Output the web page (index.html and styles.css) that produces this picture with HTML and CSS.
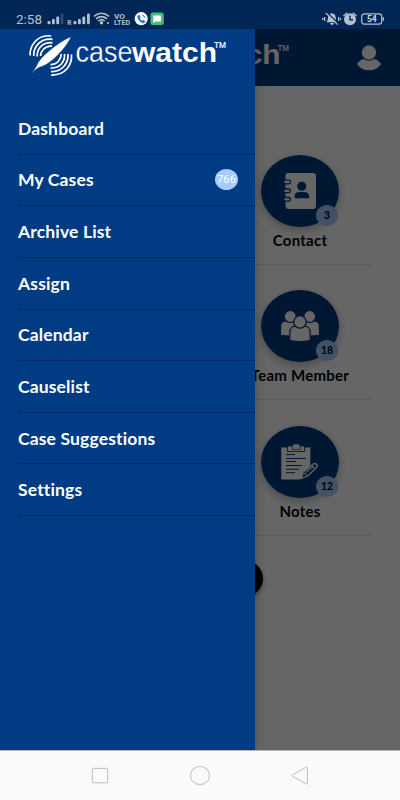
FILE: index.html
```html
<!DOCTYPE html>
<html lang="en">
<head>
    <meta charset="UTF-8">
    <meta name="viewport" content="width=device-width, initial-scale=1.0">
    <title>Casewatch</title>
    <link rel="stylesheet" href="styles.css">
</head>
<body>
    <div class="status-bar">
        <span class="time">2:58</span>
        <svg class="status-left" width="120" height="18" viewBox="0 0 120 18">
            <g fill="#b4c0d0">
                <rect x="0.5" y="11" width="3" height="3.3" rx="1"/>
                <rect x="5" y="9" width="2.8" height="5.3" rx="1"/>
                <rect x="9.3" y="6.5" width="2.8" height="7.8" rx="1"/>
                <rect x="13.6" y="3.5" width="2.8" height="10.8" rx="1" opacity=".25"/>
                <text x="20.3" y="14.5" class="roam">R</text>
                <rect x="26.5" y="11" width="3" height="3.3" rx="1"/>
                <rect x="31" y="9" width="2.8" height="5.3" rx="1"/>
                <rect x="35.4" y="6.5" width="2.8" height="7.8" rx="1"/>
                <rect x="40" y="3.5" width="2.8" height="10.8" rx="1"/>
                <circle cx="54.5" cy="12.8" r="1.7"/>
                <circle cx="61" cy="13" r="1.1"/>
                <text x="67" y="8.5" class="volte" textLength="11" lengthAdjust="spacingAndGlyphs">VO</text>
                <text x="67" y="15.3" class="volte" textLength="16" lengthAdjust="spacingAndGlyphs">LTED</text>
            </g>
            <g fill="none" stroke="#b4c0d0" stroke-width="1.6">
                <path d="M47 6.3Q54.5 0.3 62 6.3"/>
                <path d="M49 8.8Q54.5 4.4 60 8.8"/>
                <path d="M51.3 11Q54.5 8.3 57.7 11"/>
            </g>
            <circle cx="94.2" cy="8.7" r="6.6" fill="#fff"/>
            <path d="M90.3 6l1.8-1.2 1.7 2.4-1 1.1q.7 1.6 2.3 2.4l1.1-.9 2.2 1.8-1.4 1.7q-2.2.2-4.5-2.2T90.3 6z" fill="#1a73e8"/>
            <path d="M95.3 5.2q2.3.4 2.6 2.7" fill="none" stroke="#1a73e8"/>
            <rect x="103.5" y="2.5" width="13.3" height="12.6" rx="2.5" fill="#40bd7b"/>
            <path d="M106.3 5.5h7.6v6h-5.4l-2.2 1.6z" fill="#fff"/>
        </svg>
        <svg class="status-right" width="64" height="18" viewBox="0 0 64 18">
            <g fill="#b4c0d0">
                <path d="M4.5 12.2Q6 11 6 7.5T9.8 3.2Q13.7 3.8 13.7 7.5T15.3 12.2z"/>
                <path d="M8 13h4q-.5 2-2 2t-2-2z"/>
                <circle cx="28" cy="9.3" r="6"/>
                <path d="M21.4 6l3.8-3.2M34.6 6l-3.8-3.2M2.6 7v4M16.6 7v4M.7 8v2M18.5 8v2" stroke="#b4c0d0" stroke-width="1.3"/>
            </g>
            <path d="M4.8 2.2l12 11.7" stroke="#002655" stroke-width="1.3"/>
            <path d="M3.8 3l11.8 11.6" stroke="#b4c0d0" stroke-width="1.2"/>
            <path d="M28 5.5v4.3h3" fill="none" stroke="#002655" stroke-width="1.4"/>
            <rect x="39.7" y="3.9" width="20" height="10.2" rx="2.5" fill="none" stroke="#b4c0d0" stroke-width="1.2"/>
            <path d="M61.3 7.2v3.6" stroke="#b4c0d0" stroke-width="1.4"/>
            <text x="49.8" y="12" class="battery" fill="#d3dae4">54</text>
        </svg>
    </div>

    <div class="screen">
        <header class="app-header">
            <svg class="header-logo" width="160" height="44" viewBox="0 0 160 44">
                <text x="16" y="28" class="logo-bold" textLength="84.5" lengthAdjust="spacingAndGlyphs">watch</text>
                <text x="97.5" y="15" class="logo-tm" textLength="11.5" lengthAdjust="spacingAndGlyphs">TM</text>
            </svg>
            <svg class="user-icon" width="26" height="28" viewBox="0 0 26 28">
                <circle cx="13" cy="8.5" r="7.2" fill="#fff"/>
                <path d="M1 20Q4 15.5 8 15q5 3.5 10 0 4 .5 7 5-4 6.3-12 6.3T1 20z" fill="#fff"/>
            </svg>
        </header>

        <main class="tiles">
            <div class="tile">
                <div class="tile-icon">
                    <svg width="78" height="72" viewBox="0 0 78 72">
                        <rect x="24.5" y="18" width="30.5" height="36" rx="3" fill="#fff"/>
                        <g fill="#fff" stroke="#003b83" stroke-width="1.3">
                            <rect x="22.5" y="25.2" width="7" height="3.6" rx="1.8"/>
                            <rect x="22.5" y="34" width="7" height="3.6" rx="1.8"/>
                            <rect x="22.5" y="42.5" width="7" height="3.6" rx="1.8"/>
                        </g>
                        <circle cx="40.8" cy="31.2" r="4.5" fill="#003b83"/>
                        <path d="M33.7 43.2v-2q0-4.2 5-4.2h4q5.3 0 5.3 4.2v2z" fill="#003b83"/>
                    </svg>
                    <span class="badge">3</span>
                </div>
                <div class="tile-label">Contact</div>
            </div>
            <div class="tile">
                <div class="tile-icon">
                    <svg width="78" height="72" viewBox="0 0 78 72">
                        <g fill="#fff" stroke="#003b83" stroke-width="1.2">
                            <path d="M19.5 45V37q0-6 6-6h6q6 0 6 6v8q-9 2-18 0z"/>
                            <path d="M40.5 45V37q0-6 6-6h6q6 0 6 6v8q-9 2-18 0z"/>
                            <circle cx="29.3" cy="26.5" r="6"/>
                            <circle cx="48.7" cy="26.5" r="6"/>
                            <path d="M28.8 50.5V43q0-7 6.5-7h7.4q6.5 0 6.5 7v7.5q-10.2 2.3-20.4 0z"/>
                            <circle cx="39" cy="31.9" r="6.2"/>
                        </g>
                    </svg>
                    <span class="badge">18</span>
                </div>
                <div class="tile-label">Team Member</div>
            </div>
            <div class="tile">
                <div class="tile-icon">
                    <svg width="78" height="72" viewBox="0 0 78 72">
                        <path d="M20.3 21.5h29v20L39 53.5H20.3z" fill="#fff"/>
                        <path d="M26.5 25.5V20h5v-2h7.5v2h4.5v5.5z" fill="#fff" stroke="#003b83" stroke-width=".9"/>
                        <path d="M31.5 20v3.5h7.5V20" fill="none" stroke="#003b83" stroke-width=".7"/>
                        <path d="M25 28.5h9M25 32.5h20M25 35.5h10M25 39.5h16M25 43.2h13M25 46.7h9" stroke="#003b83" stroke-width="1"/>
                        <path d="M40.5 52.5l1.6-6.2L53 37.4q2.8-.2 3.3 3.2L46.7 50z" fill="#003b83" stroke="#fff" stroke-width="1.3" stroke-linejoin="round"/>
                        <path d="M42.2 46.4l4.3 3.5M50.5 39.5l3.7 3.3M44.7 46.6l7-5.7" fill="none" stroke="#fff" stroke-width="1.1"/>
                    </svg>
                    <span class="badge">12</span>
                </div>
                <div class="tile-label">Notes</div>
            </div>
            <div class="fab"></div>
        </main>

        <div class="scrim"></div>

        <nav class="drawer">
            <svg class="drawer-logo" width="204" height="46" viewBox="24 31 204 46">
                <g fill="none" stroke="#fff" stroke-width="1.7">
                    <path d="M51.2 36Q41 34.5 34.5 42.3 29.5 48.5 30.2 55.5"/>
                    <path d="M52.5 39.3Q43 38.2 37.5 44.6 33.2 50 33.8 56"/>
                    <path d="M52.5 42.8Q45 42 40.3 47 36.8 51.3 37.2 56.5"/>
                    <path d="M52 46.2Q47 45.6 43.2 49.5 40.4 52.8 40.6 56"/>
                    <path d="M51 75Q61 75.5 67 68.8 72.2 62.5 71.5 54.5"/>
                    <path d="M51 71.5Q59 72 64 66.3 68.6 61 68 54"/>
                    <path d="M50.5 68Q57.5 68.3 61.5 63.8 65 59.5 64.5 54"/>
                    <path d="M50.5 64.6Q55.5 64.6 58.6 61 61.3 57.8 61.2 54"/>
                </g>
                <path d="M71.3 36.5C64 39.5 56 45 49.5 50.5 43 56 38.5 60.5 36.3 66.3L31.3 74Q35 69.5 39.3 67.3C47 65.5 53.5 59.5 58.5 54.3 64 48.5 68.8 42.5 71.3 36.5z" fill="#fff" stroke="#003b83" stroke-width=".6"/>
                <text x="75.5" y="62.3" class="logo-light" textLength="57" lengthAdjust="spacingAndGlyphs">case</text>
                <text x="132" y="62.3" class="logo-bold" textLength="85" lengthAdjust="spacingAndGlyphs">watch</text>
                <text x="214" y="47.5" class="logo-tm" textLength="12" lengthAdjust="spacingAndGlyphs">TM</text>
            </svg>
            <ul class="menu">
                <li>Dashboard</li>
                <li>My Cases <span class="count">766</span></li>
                <li>Archive List</li>
                <li>Assign</li>
                <li>Calendar</li>
                <li>Causelist</li>
                <li>Case Suggestions</li>
                <li>Settings</li>
            </ul>
        </nav>
    </div>

    <div class="nav-bar">
        <svg width="20" height="20" viewBox="0 0 20 20"><rect x="2.3" y="2.4" width="15.4" height="14.4" rx="1"/></svg>
        <svg width="20" height="20" viewBox="0 0 20 20"><ellipse cx="10" cy="9.5" rx="9.6" ry="9"/></svg>
        <svg width="20" height="20" viewBox="0 0 20 20"><path d="M16.5 1.1q1-.4 1 .6v15.8q0 1-1 .6L2.5 10.3q-1-.7 0-1.4z"/></svg>
    </div>
</body>
</html>
```
FILE: styles.css
```css
:root {
    --primary-color: #003b83;
    --status-color: #002655;
    --badge-color: #a5cdff;
}

* {
    box-sizing: border-box;
}

body {
    margin: 0;
    width: 400px;
    height: 800px;
    display: flex;
    flex-direction: column;
    overflow: hidden;
    font-family: Lato, "Liberation Sans", sans-serif;
    font-variant-ligatures: none;
}

.status-bar {
    height: 29px;
    background-color: var(--status-color);
    display: flex;
    align-items: center;
    padding: 8px 16px 0;
    flex-shrink: 0;
}

.time {
    width: 31px;
    color: #b4c0d0;
    font-family: Roboto, sans-serif;
    font-size: 13.5px;
    line-height: 16px;
}

.status-right {
    margin-left: auto;
    margin-right: -2px;
}

.roam {
    font: bold 6.5px Roboto, sans-serif;
}

.volte {
    font: bold 7.5px Roboto, sans-serif;
}

.battery {
    font: bold 8.5px Roboto, sans-serif;
    text-anchor: middle;
}

.screen {
    position: relative;
    flex-grow: 1;
    background-color: #fff;
    overflow: hidden;
}

.app-header {
    height: 57px;
    background-color: var(--primary-color);
    display: flex;
    align-items: center;
    justify-content: flex-end;
    padding-right: 18px;
}

.header-logo {
    margin-right: 16px;
}

.logo-light {
    font: 29.5px "Liberation Sans", sans-serif;
    fill: #fff;
    stroke: var(--primary-color);
    stroke-width: 0.3px;
}

.logo-bold {
    font: bold 28px "Liberation Sans", sans-serif;
    fill: #fff;
}

.logo-tm {
    font: 8.5px "Liberation Sans", sans-serif;
    fill: #fff;
    stroke: #fff;
    stroke-width: 0.2px;
}

.tiles {
    width: 144px;
    margin-left: 228px;
    padding-top: 43px;
}

.tile {
    height: 135.6px;
    padding-top: 25.5px;
    border-bottom: 1px solid #ebebeb;
    display: flex;
    flex-direction: column;
    align-items: center;
}

.tile-icon {
    position: relative;
    width: 78px;
    height: 72px;
    border-radius: 50%;
    background-color: var(--primary-color);
    box-shadow: 0 3px 8px rgba(0, 0, 0, 0.3);
}

.tile-icon svg {
    display: block;
}

.badge {
    position: absolute;
    right: 1px;
    bottom: 1px;
    width: 22px;
    height: 21px;
    border-radius: 50%;
    background-color: var(--badge-color);
    font-size: 10.5px;
    font-weight: bold;
    line-height: 21px;
    text-align: center;
}

.tile-label {
    margin-top: 3px;
    font-size: 15px;
    font-weight: bold;
    letter-spacing: 0.25px;
    line-height: 20px;
    color: #000;
    white-space: nowrap;
}

.fab {
    width: 39px;
    height: 37px;
    margin: 24px 0 0 -4.5px;
    border-radius: 50%;
    background-color: #000;
    box-shadow: 0 2px 4px rgba(0, 0, 0, 0.4);
}

.scrim {
    position: absolute;
    inset: 0;
    background-color: rgba(0, 0, 0, 0.6);
}

.drawer {
    position: absolute;
    top: 0;
    left: 0;
    bottom: 0;
    width: 255px;
    background-color: var(--primary-color);
    box-shadow: 0 0 10px rgba(0, 0, 0, 0.3);
}

.drawer-logo {
    display: block;
    margin: 2px 0 0 24px;
}

.menu {
    list-style-type: none;
    margin: 26px 0 0 18px;
    padding: 0;
}

.menu li {
    display: flex;
    align-items: center;
    justify-content: space-between;
    height: 51.65px;
    padding-right: 17px;
    border-bottom: 1px solid #002b62;
    color: #fff;
    font-size: 17.5px;
    font-weight: bold;
    letter-spacing: 0.15px;
}

.count {
    width: 23px;
    height: 21px;
    border-radius: 50%;
    background-color: var(--badge-color);
    font-family: Roboto, sans-serif;
    font-size: 11px;
    font-weight: normal;
    line-height: 21px;
    text-align: center;
}

.nav-bar {
    height: 50px;
    background-color: #fafafa;
    border-top: 1px solid #b5b5b8;
    display: flex;
    justify-content: center;
    align-items: center;
    gap: 80px;
    flex-shrink: 0;
}

.nav-bar svg {
    fill: none;
    stroke: #bdbdbd;
    stroke-width: 1;
}
```
